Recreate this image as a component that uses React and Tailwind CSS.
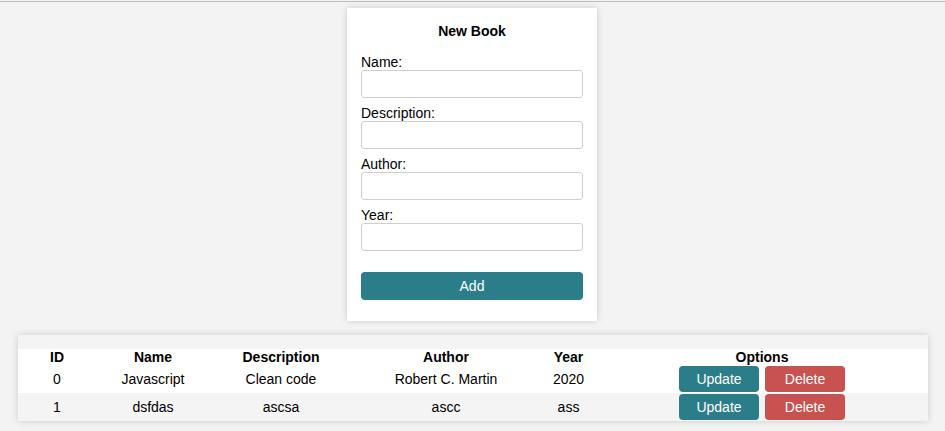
export default function App() {
  const font = { fontFamily: '"Liberation Sans", Arial, sans-serif' };
  const rows = [
    { id: "0", name: "Javascript", desc: "Clean code", author: "Robert C. Martin", year: "2020" },
    { id: "1", name: "dsfdas", desc: "ascsa", author: "ascc", year: "ass" },
  ];
  const grid = "grid grid-cols-[78px_114px_142px_188px_57px_330px_1px] items-center text-center";
  return (
    <div className="min-h-[431px] bg-[#f2f3f2] text-[14px] text-black" style={font}>
      <div className="h-px bg-[#f2f3f2]" />
      <div className="h-px bg-[#bcbcbc]" />
      <div className="pt-[6px] flex">
        <div className="ml-[347px] w-[250px] bg-white px-[14px] pt-[15px] pb-[21px] shadow-[0_0_7px_rgba(0,0,0,0.16)]">
          <div className="text-center font-bold leading-[16px]">New Book</div>
          <div className="mt-[15px] flex flex-col gap-[7px]">
            {["Name:", "Description:", "Author:", "Year:"].map((l) => (
              <div key={l} className="flex flex-col">
                <label className="leading-[16px]">{l}</label>
                <input className="h-[28px] w-full rounded-[3px] border border-[#cfcfcf] bg-white outline-none" />
              </div>
            ))}
          </div>
          <button className="mt-[21px] h-[28px] w-full rounded-[4px] bg-[#2c7d8a] pt-px text-white leading-[27px]">
            Add
          </button>
        </div>
      </div>
      <div className="mt-[14px] ml-[18px] w-[910px] bg-[#f3f4f3] pt-[14px] shadow-[0_0_7px_rgba(0,0,0,0.16)]">
        <div className={grid + " h-[16px] bg-white font-bold leading-[16px]"}>
          <div>ID</div>
          <div>Name</div>
          <div>Description</div>
          <div>Author</div>
          <div>Year</div>
          <div>Options</div>
          <div />
        </div>
        {rows.map((r, i) => (
          <div
            key={r.id}
            className={grid + " h-[28px] " + (i % 2 === 0 ? "bg-white" : "bg-[#f4f4f4]")}
          >
            <div>{r.id}</div>
            <div>{r.name}</div>
            <div>{r.desc}</div>
            <div>{r.author}</div>
            <div>{r.year}</div>
            <div className="flex justify-center gap-[6px]">
              <button className="h-[26px] w-[80px] rounded-[4px] bg-[#2c7d8a] text-white">Update</button>
              <button className="h-[26px] w-[80px] rounded-[4px] bg-[#c85250] text-white">Delete</button>
            </div>
            <div />
          </div>
        ))}
      </div>
    </div>
  );
}
